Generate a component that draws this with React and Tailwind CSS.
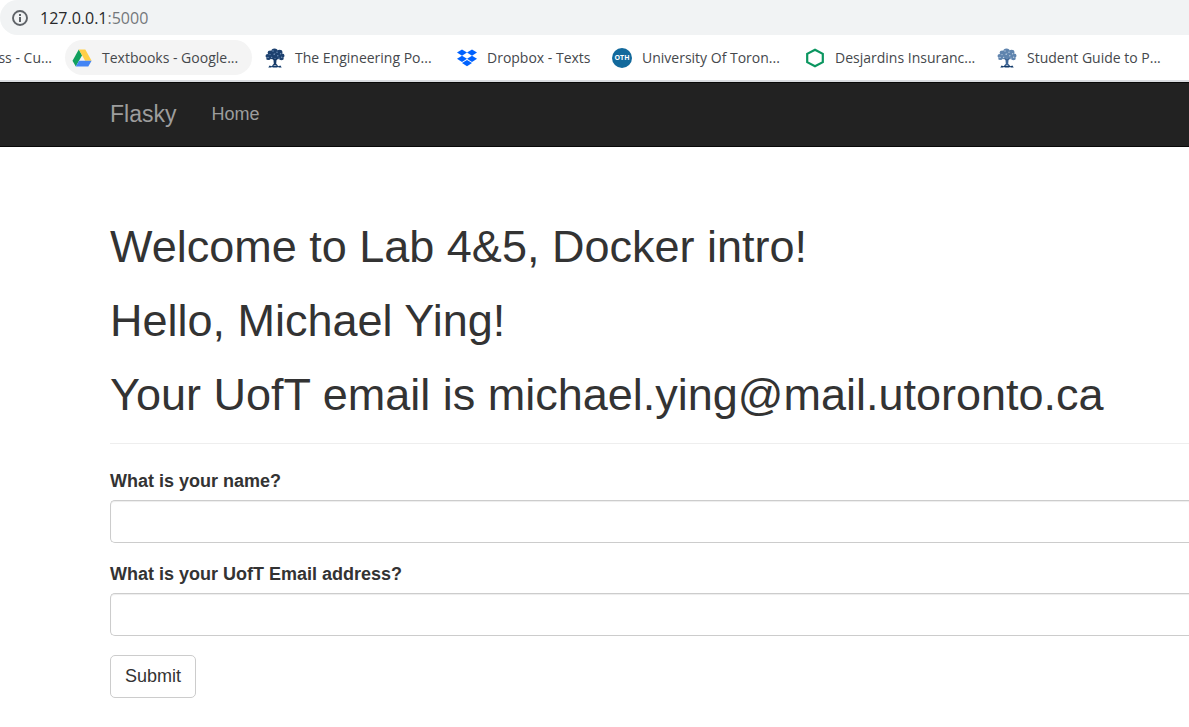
import React from "react";

function DriveIcon() {
  return (
    <svg viewBox="0 0 20 20" className="size-5 shrink-0" aria-hidden="true">
      <path d="M6.8 1.5 .5 12.8 3.8 18.5 10.1 7.3Z" fill="#11a05e" />
      <path d="M6.8 1.5h6.5l6.3 11.2h-6.5Z" fill="#ffcf48" />
      <path d="M7 12.8h12.6l-3.3 5.7H3.8Z" fill="#4485f4" />
    </svg>
  );
}

function TreeIcon({ pale = false }) {
  const leaf = pale ? "#5f84ae" : "#1d416f";
  const dot = pale ? "#b9cbe0" : "#7394ba";
  const dark = pale ? "#3d6596" : "#163a68";
  return (
    <svg viewBox="0 0 20 20" className="size-5 shrink-0" aria-hidden="true">
      <g fill={leaf}>
        <ellipse cx="9.500" cy="3.200" rx="3.200" ry="2.600" />
        <ellipse cx="5.200" cy="4.800" rx="2.600" ry="2.200" />
        <ellipse cx="14.600" cy="4.200" rx="2.800" ry="2.400" />
        <ellipse cx="2.800" cy="8" rx="2.300" ry="1.900" />
        <ellipse cx="17" cy="7.800" rx="2.500" ry="2.200" />
        <ellipse cx="7.200" cy="8" rx="3.600" ry="3.300" />
        <ellipse cx="12.800" cy="8" rx="3.600" ry="3.300" />
        <ellipse cx="3.400" cy="10.800" rx="2.200" ry="1.300" />
        <ellipse cx="16.400" cy="10.800" rx="2.400" ry="1.400" />
      </g>
      <path d="M7 10.500h6l-1.500 1.700-.3 3.500 1.500 1.600H7.300l1.500-1.600-.3-3.500Z" fill={dark} />
      <path
        d="M3.300 19.600 4.600 17.600l1.900.6L8 16.900l2 1 2-1 1.500 1.300 1.900-.6 1.300 2h-2.700l-1-.7-1 .7H8l-1-.7-1 .7Z"
        fill="#123a6b"
      />
      <g fill={dot}>
        <circle cx="8" cy="3" r=".7" />
        <circle cx="12" cy="4.200" r=".7" />
        <circle cx="5" cy="6.600" r=".7" />
        <circle cx="15.600" cy="5.800" r=".7" />
        <circle cx="9.200" cy="6.200" r=".8" />
        <circle cx="3" cy="9.400" r=".7" />
        <circle cx="6.600" cy="9.400" r=".7" />
        <circle cx="12.800" cy="7.800" r=".7" />
        <circle cx="16.600" cy="9.200" r=".7" />
        <circle cx="14" cy="10.200" r=".6" />
      </g>
    </svg>
  );
}

function DropboxIcon() {
  return (
    <svg viewBox="0 0 20 20" className="size-5 shrink-0" fill="#0062ff" aria-hidden="true">
      <path d="M5 1.400 10 4.500 5 7.700 0 4.500Z" />
      <path d="M15 1.400 20 4.500 15 7.700 10 4.500Z" />
      <path d="M5 7.700 10 10.800 5 14 0 10.800Z" />
      <path d="M15 7.700 20 10.800 15 14 10 10.800Z" />
      <path d="M10 11.900 15 15 10 18.200 5 15Z" />
    </svg>
  );
}

function OthIcon() {
  return (
    <span className="flex size-5 shrink-0 items-center justify-center rounded-full bg-[#12699c] text-[7px] font-bold text-white">
      OTH
    </span>
  );
}

function HexagonIcon() {
  return (
    <svg viewBox="0 0 20 20" className="size-5 shrink-0" aria-hidden="true">
      <path d="M10 1.700 17.800 5.900v8.200L10 18.300 2.200 14.100V5.900Z" fill="none" stroke="#0b9660" strokeWidth="2.200" />
    </svg>
  );
}

function InfoIcon() {
  return (
    <svg viewBox="0 0 16 16" className="size-4 shrink-0" aria-hidden="true">
      <circle cx="8" cy="8" r="7" fill="none" stroke="#5f6368" strokeWidth="1.900" />
      <path d="M7 7h2v5H7ZM7 4h2v2H7Z" fill="#5f6368" />
    </svg>
  );
}

const bookmarks = [
  { label: "Textbooks - Google...", icon: <DriveIcon />, size: "w-[187px] bg-[#f4f4f4]" },
  { label: "The Engineering Po...", icon: <TreeIcon />, size: "w-[186px]" },
  { label: "Dropbox - Texts", icon: <DropboxIcon />, size: "w-[149px]" },
  { label: "University Of Toron...", icon: <OthIcon />, size: "w-[187px]" },
  { label: "Desjardins Insuranc...", icon: <HexagonIcon />, size: "w-[186px]" },
  { label: "Student Guide to P...", icon: <TreeIcon pale />, size: "w-[187px]" },
];

function BrowserBar() {
  return (
    <header className="border-b-2 border-[#dadce0] font-['Open_Sans',sans-serif]">
      <div className="flex h-[35px] items-center gap-3 rounded-l-full bg-[#f1f3f4] pl-3">
        <InfoIcon />
        <p className="text-base text-[#27282b]">
          127.0.0.1<span className="text-[#74777b]">:5000</span>
        </p>
      </div>
      <nav aria-label="Bookmarks" className="flex h-[45px] items-center gap-1.5 overflow-hidden text-sm text-[#45484c]">
        <a href="#" className="flex w-[59px] shrink-0 justify-end pr-[7px] whitespace-nowrap">
          ss - Cu...
        </a>
        {bookmarks.map((b) => (
          <a
            key={b.label}
            href="#"
            className={`flex h-[35px] shrink-0 items-center gap-2.5 rounded-full pl-[7px] whitespace-nowrap ${b.size}`}
          >
            {b.icon}
            {b.label}
          </a>
        ))}
      </nav>
    </header>
  );
}

function Field({ id, label, type }) {
  return (
    <div className="mb-[19px]">
      <label htmlFor={id} className="mb-[6px] block leading-[25px] font-bold">
        {label}
      </label>
      <input
        id={id}
        type={type}
        className="block h-[43px] w-full rounded-l-[5px] border border-r-0 border-[#ccc] bg-white px-4 shadow-[inset_0_1px_1px_rgba(0,0,0,0.075)] outline-none focus:border-[#66afe9]"
      />
    </div>
  );
}

export default function App() {
  return (
    <div className="bg-white font-['Liberation_Sans',Arial,sans-serif] text-[18px] text-[#333]">
      <BrowserBar />
      <nav className="flex h-[65px] items-center gap-[35px] border-y border-[#080808] bg-[#222] pl-[110px] text-[#9d9d9d]">
        <a href="#" className="text-[23px]">
          Flasky
        </a>
        <a href="#">Home</a>
      </nav>
      <main className="pt-[75px] pl-[110px]">
        <div className="space-y-6 border-b border-[#eee] pb-[23px] text-[45px] leading-[50px] whitespace-nowrap">
          <h1>Welcome to Lab 4&amp;5, Docker intro!</h1>
          <h1>Hello, Michael Ying!</h1>
          <h1>Your UofT email is michael.ying@mail.utoronto.ca</h1>
        </div>
        <form className="pt-[25px] pb-[30px]" onSubmit={(e) => e.preventDefault()}>
          <Field id="name" label="What is your name?" type="text" />
          <Field id="email" label="What is your UofT Email address?" type="email" />
          <button type="submit" className="h-[43px] rounded-[5px] border border-[#ccc] bg-white px-[14px]">
            Submit
          </button>
        </form>
      </main>
    </div>
  );
}
